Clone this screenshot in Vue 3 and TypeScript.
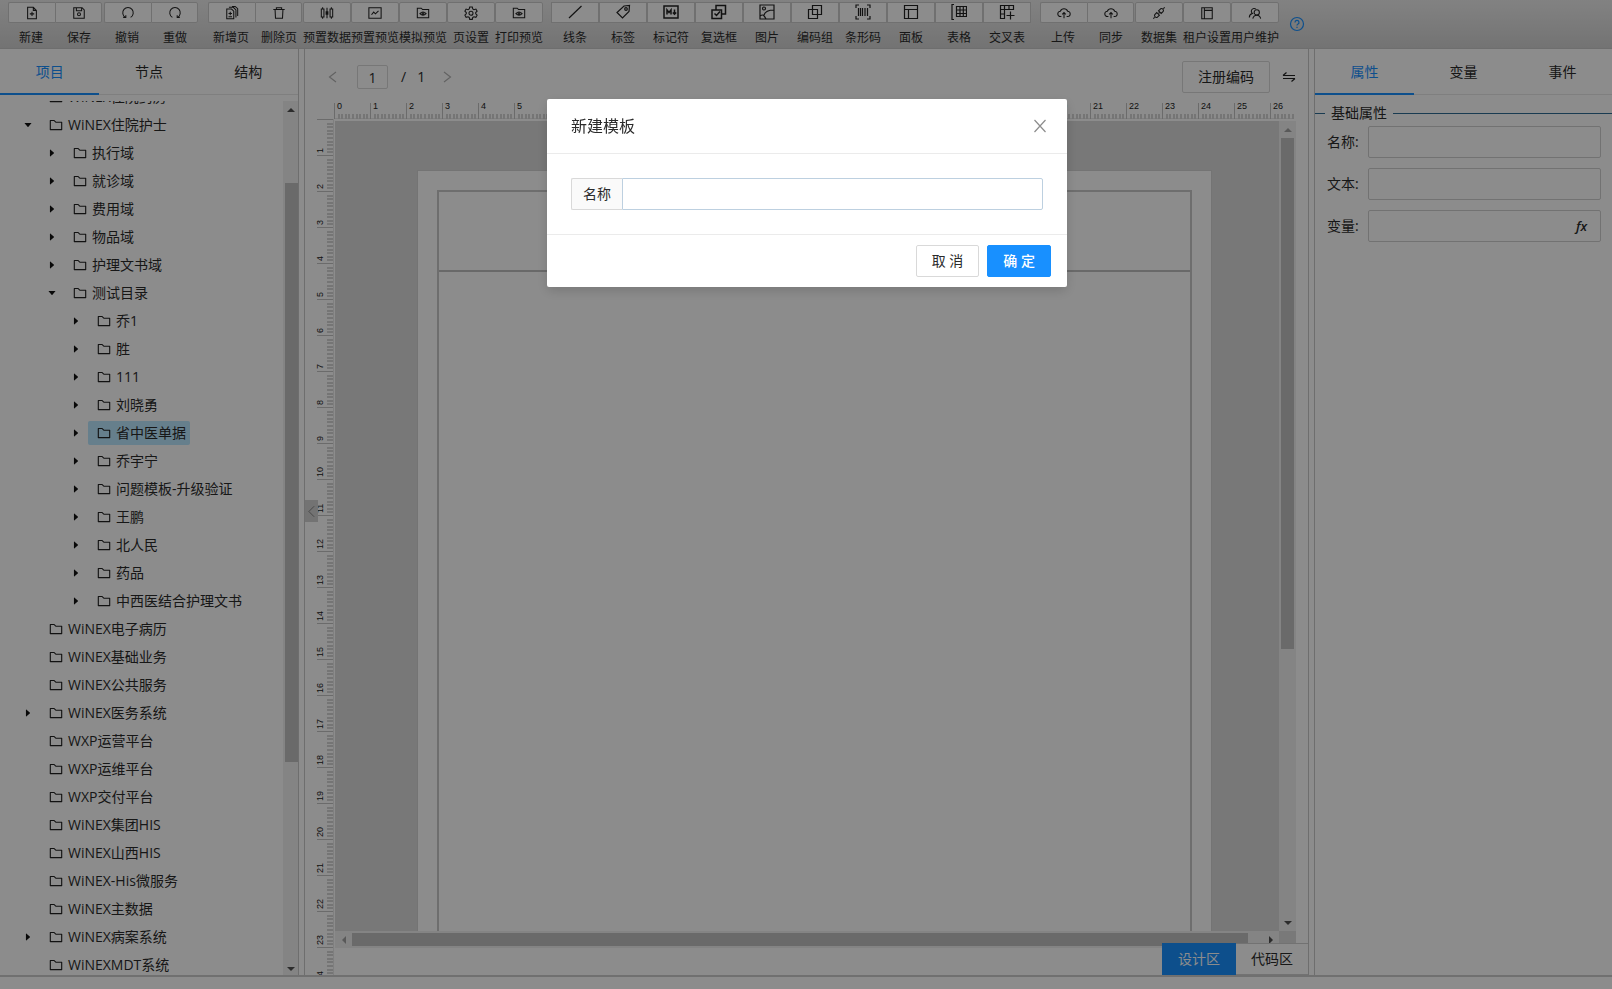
<script setup lang="ts">
import { ref } from 'vue'

interface Tool { label: string; icon: string; join?: 'start' | 'end' }
interface TreeNode { label: string; level: number; state?: 'open' | 'closed'; selected?: boolean }

const icons: Record<string, string> = {
  add: '<path d="M3 1.5h6.5L13 5v9.5H3zM9.5 1.5V5H13M8 6.5v5M5.5 9h5"/>',
  save: '<path d="M2 2h9.5L14 4.500V14H2zM5 2v3.500h6V2"/><circle cx="8" cy="9.500" r="1.700"/>',
  undo: '<path d="M5 13A6 6 0 1 1 11 13M2.500 13H5.500V10.500"/>',
  redo: '<path d="M11 13A6 6 0 1 0 5 13M13.500 13H10.500V10.500"/>',
  pages: '<path d="M2 3.500h5.500L10 6v8.500H2zM4.500 1.500h5l3 3V13M8 .500h3.500L14.500 3v8.500M6 6.500v4M4 8.500h4M4 12.300h4"/>',
  trash: '<path d="M1.500 4h13M5 4V2h6v2M3.500 4l.5 10h8l.5-10"/>',
  sliders: '<path d="M3 1.500v2M3 12.500v2M13 1.500v2M13 12.500v2M8 2v12M1.500 3.500h3v9h-3zM11.500 3.500h3v9h-3zM7 6.500h2v3H7z"/>',
  chart: '<path d="M1 2h14v12H1zM4 10l2.500-3 2 2L12 5.500"/>',
  preview: '<path d="M1.500 2.500h4.500L7.500 4h7v9.500h-13zM4.500 8.800Q8 5 11.500 8.800Q8 12 4.500 8.800z"/><circle cx="8" cy="8.800" r="1"/>',
  gear: '<path d="M6.500 1.200h3l.5 2.200 1.400.8 2.200-.7 1.400 2.500-1.600 1.500v1.500l1.600 1.500-1.400 2.500-2.200-.7-1.400.8-.5 2.200h-3L6 13.100l-1.400-.8-2.200.7L1 10.500 2.600 9V7.500L1 6l1.400-2.500 2.200.7L6 3.400z"/><circle cx="8" cy="8.200" r="2.300"/>',
  line: '<path d="M2 14L14.500 2"/>',
  tag: '<path d="M9 2l5.500-.500L14 7.500 7.500 14 2 8.500z"/><circle cx="11" cy="5" r="1.300"/>',
  mark: '<path stroke-width="1.500" d="M1 2h14v12H1zM4 10.500V6l2 2.500L8 6v4.500M11.500 5.500v4M9.800 8.500l1.700 1.700 1.700-1.700"/>',
  check: '<path stroke-width="1.500" d="M1 6h9.500v8.500H1zM5 6V1.500h9.500V10h-4M3.500 9.500l2 2 3.500-4"/>',
  image: '<path d="M1 1h14v14H1zM1 12c3-2 4-1 6 3M5 11c1-3 5-5 10-5"/><circle cx="5" cy="4.500" r="1.500"/>',
  group: '<path d="M1.500 5.500h9v9h-9zM5.500 1.500h9v9h-9z"/>',
  barcode: '<path d="M1 4V1h3M12 1h3v3M15 12v3h-3M4 15H1v-3M3.500 4v8M5.500 4v8M7.500 4v8M10 4v8M12.500 4v8"/>',
  panel: '<path d="M1.500 1.500h13v13h-13zM1.500 5.500h13M5.500 5.500v9"/>',
  grid: '<path d="M3 .500H1v15h2M5.500 2.500h10v10h-10zM5.500 6h10M5.500 9.500h10M9 2.500v10M12.300 2.500v10"/>',
  cross: '<path d="M1.500 1.500h13v4h-13zM1.500 5.500v9h4v-13M1.500 10h4M10 1.500v4M11.500 7.500v8M7.500 11.500h8"/>',
  cloud: '<path d="M5 12H4a3 3 0 0 1-.2-6A4.500 4.500 0 0 1 12.200 6a3 3 0 0 1-.2 6h-1M8 14V7.500M6 9.500l2-2 2 2"/>',
  link: '<path d="M1.500 14.500L3 13M13 3l1.500-1.500M7.500 5.500l3 3 2.300-2.300a2.200 2.200 0 0 0-3-3zM5.500 7.500l3 3-2.300 2.300a2.200 2.200 0 0 1-3-3zM7.500 7.500l1 1"/>',
  tenant: '<path d="M2 2h12v12.500H2zM5 2v12.500M5 5h9"/>',
  users: '<path d="M1.500 13c0-2.500 1.500-4 3.500-4.500A3.200 3.200 0 1 1 9 3.500M14.500 14.500c-.5-2.500-2-4-4.500-4-2.500 0-4 1.500-4.500 4"/><circle cx="10" cy="7.300" r="3"/>',
}

const groups: Tool[][] = [
  [
    { label: '新建', icon: 'add', join: 'start' }, { label: '保存', icon: 'save', join: 'end' },
    { label: '撤销', icon: 'undo', join: 'start' }, { label: '重做', icon: 'redo', join: 'end' },
  ],
  [
    { label: '新增页', icon: 'pages', join: 'start' }, { label: '删除页', icon: 'trash', join: 'end' },
    { label: '预置数据', icon: 'sliders' }, { label: '预置预览', icon: 'chart' },
    { label: '模拟预览', icon: 'preview' }, { label: '页设置', icon: 'gear' }, { label: '打印预览', icon: 'preview' },
  ],
  [
    { label: '线条', icon: 'line' }, { label: '标签', icon: 'tag' }, { label: '标记符', icon: 'mark' },
    { label: '复选框', icon: 'check' }, { label: '图片', icon: 'image' }, { label: '编码组', icon: 'group' },
    { label: '条形码', icon: 'barcode' }, { label: '面板', icon: 'panel' }, { label: '表格', icon: 'grid' },
    { label: '交叉表', icon: 'cross' },
  ],
  [
    { label: '上传', icon: 'cloud', join: 'start' }, { label: '同步', icon: 'cloud', join: 'end' },
    { label: '数据集', icon: 'link' }, { label: '租户设置', icon: 'tenant' }, { label: '用户维护', icon: 'users' },
  ],
]

const tree: TreeNode[] = [
  { label: 'WiNEX住院药房', level: 0 },
  { label: 'WiNEX住院护士', level: 0, state: 'open' },
  ...['执行域', '就诊域', '费用域', '物品域', '护理文书域'].map((label): TreeNode => ({ label, level: 1, state: 'closed' })),
  { label: '测试目录', level: 1, state: 'open' },
  ...['乔1', '胜', '111', '刘晓勇', '省中医单据', '乔宇宁', '问题模板-升级验证', '王鹏', '北人民', '药品', '中西医结合护理文书']
    .map((label): TreeNode => ({ label, level: 2, state: 'closed', selected: label === '省中医单据' })),
  { label: 'WiNEX电子病历', level: 0 },
  { label: 'WiNEX基础业务', level: 0 },
  { label: 'WiNEX公共服务', level: 0 },
  { label: 'WiNEX医务系统', level: 0, state: 'closed' },
  { label: 'WXP运营平台', level: 0 },
  { label: 'WXP运维平台', level: 0 },
  { label: 'WXP交付平台', level: 0 },
  { label: 'WiNEX集团HIS', level: 0 },
  { label: 'WiNEX山西HIS', level: 0 },
  { label: 'WiNEX-His微服务', level: 0 },
  { label: 'WiNEX主数据', level: 0 },
  { label: 'WiNEX病案系统', level: 0, state: 'closed' },
  { label: 'WiNEXMDT系统', level: 0 },
]

const UNIT = 36
function minorTicks(count: number): number[] {
  const out: number[] = []
  for (let i = 1; i < count * 10; i++) if (i % 10) out.push(Math.round((i * UNIT) / 10))
  return out
}
const across = Array.from({ length: 27 }, (_, i) => i)
const down = Array.from({ length: 25 }, (_, i) => i)
const acrossMinor = minorTicks(27)
const downMinor = minorTicks(25)

const leftTabs = ['项目', '节点', '结构']
const rightTabs = ['属性', '变量', '事件']
const leftTab = ref('项目')
const rightTab = ref('属性')
const page = ref('1')
const templateName = ref('')
const props = ref([
  { id: 'prop-name', label: '名称', value: '' },
  { id: 'prop-text', label: '文本', value: '' },
  { id: 'prop-var', label: '变量', value: '' },
])
</script>

<template>
  <div class="app">
    <header class="toolbar">
      <div v-for="(group, g) in groups" :key="g" class="tool-group" :class="{ elements: g === 2 }">
        <div v-for="tool in group" :key="tool.label" class="tool">
          <button type="button" class="tool-btn" :class="tool.join" :aria-label="tool.label">
            <svg viewBox="0 0 16 16" class="icon" v-html="icons[tool.icon]"></svg>
          </button>
          <span class="tool-label">{{ tool.label }}</span>
        </div>
      </div>
      <button type="button" class="help" aria-label="帮助">
        <svg viewBox="0 0 16 16"><circle cx="8" cy="8" r="6.500" /><path d="M6 6.500a2 2 0 1 1 2.700 1.800c-.5.200-.7.500-.7 1.200M8 10.700v1.300" /></svg>
      </button>
    </header>

    <main class="workspace">
      <aside class="panel side">
        <nav class="tabs">
          <button v-for="t in leftTabs" :key="t" type="button" class="tab" :class="{ active: t === leftTab }" @click="leftTab = t">{{ t }}</button>
        </nav>
        <div class="tree-area">
          <ul class="tree">
            <li v-for="node in tree" :key="node.label" class="node" :class="'level-' + node.level">
              <span class="switcher">
                <svg v-if="node.state" viewBox="0 0 1024 1024" :class="{ closed: node.state === 'closed' }"><path d="M840.4 300H183.600c-19.700 0-30.700 20.800-18.500 35l328.400 380.800c9.400 10.900 27.500 10.900 37 0L858.900 335c12.200-14.200 1.200-35-18.500-35z" /></svg>
              </span>
              <span class="node-body" :class="{ selected: node.selected }">
                <svg viewBox="0 0 1024 1024" class="folder"><path d="M880 298.400H521L403.700 186.200a8.150 8.150 0 0 0-5.500-2.200H144c-17.700 0-32 14.300-32 32v592c0 17.700 14.300 32 32 32h736c17.700 0 32-14.300 32-32V330.400c0-17.700-14.300-32-32-32zM840 768H184V256h188.500l119.600 114.400H840V768z" /></svg>
                <span>{{ node.label }}</span>
              </span>
            </li>
          </ul>
          <div class="bar vertical tree-bar">
            <i class="arrow up"></i><i class="thumb"></i><i class="arrow down"></i>
          </div>
        </div>
      </aside>

      <section class="panel center">
        <div class="pager">
          <button type="button" class="step" aria-label="上一页"><svg viewBox="0 0 16 16"><path d="M11 3L4.500 8l6.500 5" /></svg></button>
          <input v-model="page" class="page-input" aria-label="页码" />
          <span class="slash">/</span>
          <span class="total">1</span>
          <button type="button" class="step" aria-label="下一页"><svg viewBox="0 0 16 16"><path d="M5 3l6.500 5L5 13" /></svg></button>
          <button type="button" class="btn register">注册编码</button>
          <button type="button" class="swap" aria-label="切换">
            <svg viewBox="0 0 14 14"><path d="M1 5.500h12M1 5.500L4.500 2.500M1 8.500h12M13 8.500L9.500 11.500" /></svg>
          </button>
        </div>
        <div class="stage">
          <svg class="ruler-x">
            <g v-for="n in across" :key="n">
              <rect class="major" :x="n * UNIT" y="0" width="1" height="16" />
              <text :x="n * UNIT + 3" y="6">{{ n }}</text>
            </g>
            <rect v-for="t in acrossMinor" :key="t" class="minor" :x="t" y="11" width="2" height="5" />
          </svg>
          <svg class="ruler-y">
            <g v-for="n in down" :key="n">
              <rect class="major" x="0" :y="n * UNIT" width="16" height="1" />
              <text v-if="n" :transform="`translate(6 ${n * UNIT - 2}) rotate(-90)`">{{ n }}</text>
            </g>
            <rect v-for="t in downMinor" :key="t" class="minor" x="10" :y="t" width="6" height="2" />
          </svg>
          <div class="viewport">
            <div class="canvas">
              <div class="paper"><div class="frame"><div class="frame-head"></div></div></div>
            </div>
            <div class="bar vertical canvas-bar-y">
              <i class="arrow up dim"></i><i class="thumb"></i><i class="arrow down"></i>
            </div>
            <div class="bar horizontal canvas-bar-x">
              <i class="arrow left dim"></i><i class="thumb"></i><i class="arrow right"></i>
            </div>
            <div class="corner"></div>
          </div>
        </div>
        <button type="button" class="collapse" aria-label="收起"><svg viewBox="0 0 8 14"><path d="M7 1L1 7l6 6" /></svg></button>
        <div class="modes">
          <button type="button" class="mode on">设计区</button>
          <button type="button" class="mode">代码区</button>
        </div>
      </section>

      <aside class="panel side attributes">
        <nav class="tabs">
          <button v-for="t in rightTabs" :key="t" type="button" class="tab" :class="{ active: t === rightTab }" @click="rightTab = t">{{ t }}</button>
        </nav>
        <fieldset class="props">
          <legend>基础属性</legend>
          <div v-for="p in props" :key="p.id" class="prop">
            <label :for="p.id">{{ p.label }}:</label>
            <span class="prop-field">
              <input :id="p.id" v-model="p.value" />
              <em v-if="p.id === 'prop-var'">fx</em>
            </span>
          </div>
        </fieldset>
      </aside>
    </main>
    <footer class="status"></footer>

    <div class="mask">
      <div class="modal" role="dialog" aria-labelledby="modal-title">
        <div class="modal-head">
          <span id="modal-title">新建模板</span>
          <button type="button" class="close" aria-label="关闭"><svg viewBox="0 0 14 14"><path d="M1.500 1l11 12M12.500 1l-11 12" /></svg></button>
        </div>
        <div class="modal-body">
          <label class="addon" for="template-name">名称</label>
          <input id="template-name" v-model="templateName" class="name-input" />
        </div>
        <div class="modal-foot">
          <button type="button" class="btn">取 消</button>
          <button type="button" class="btn primary">确 定</button>
        </div>
      </div>
    </div>
  </div>
</template>

<style>
body { margin: 0; background: #fff; }
</style>

<style scoped>
.app {
  display: flex;
  flex-direction: column;
  height: 100vh;
  overflow: hidden;
  font: 14px/22px "Open Sans", "Noto Sans CJK SC", sans-serif;
  color: #2b2b2b;
}
.app *, .app { box-sizing: border-box; }
button, input { font: inherit; color: inherit; margin: 0; padding: 0; }
button { background: none; border: 0; cursor: pointer; }
svg { display: block; fill: none; }

.toolbar {
  display: flex;
  flex: none;
  gap: 8px;
  height: 49px;
  padding: 2px 7px 0;
  background: linear-gradient(#ededed, #d2d2d2);
  border-bottom: 1px solid #c8c8c8;
}
.tool-group { display: flex; flex: none; }
.tool { width: 48px; display: flex; flex-direction: column; align-items: center; }
.tool-btn {
  display: flex;
  align-items: center;
  justify-content: center;
  width: 48px;
  height: 24px;
  padding-top: 1px;
  background: #fff;
  border: 1px solid #cdcdcd;
  border-radius: 2px;
}
.tool-btn.start { border-right: 0; border-radius: 2px 0 0 2px; width: 47px; align-self: flex-end; }
.tool-btn.end { border-radius: 0 2px 2px 0; width: 47px; align-self: flex-start; }
.icon { width: 14px; height: 14px; stroke: #222; stroke-width: 1.2; }
.elements .tool-btn { padding: 0 0 1px; border-radius: 0; }
.elements .icon { width: 16px; height: 16px; }
.tool-label { padding-top: 3px; font-size: 12px; line-height: 20px; margin-top: 2px; white-space: nowrap; }
.help { margin: 14px 0 0 2px; width: 16px; height: 16px; }
.help svg { stroke: #1890ff; stroke-width: 1.2; }

.workspace { display: flex; flex: 1; min-height: 0; gap: 5px; }
.panel { background: #fff; min-height: 0; }
.side { flex: none; width: 299px; display: flex; flex-direction: column; border-right: 1px solid #c8c8c8; }
.side.attributes { width: 298px; border-right: 0; border-left: 1px solid #c8c8c8; }
.tabs { display: grid; grid-template-columns: repeat(3, 1fr); height: 46px; flex: none; border-bottom: 1px solid #e8e8e8; }
.tab { height: 46px; padding-top: 2px; border-bottom: 2px solid transparent; }
.tab.active { color: #1890ff; border-bottom-color: #1890ff; }

.tree-area { display: flex; flex: 1; min-height: 0; margin-top: 6px; overflow: hidden; }
.tree { flex: 1; min-width: 0; margin: -18px 0 0; padding: 0; list-style: none; }
.node { display: flex; align-items: center; height: 28px; white-space: nowrap; }
.level-0 { padding-left: 16px; }
.level-1 { padding-left: 40px; }
.level-2 { padding-left: 64px; }
.switcher { display: flex; justify-content: center; width: 24px; }
.switcher svg { width: 10px; height: 10px; fill: #111; }
.switcher .closed { transform: rotate(-90deg); }
.node-body { display: flex; align-items: center; gap: 4px; height: 24px; padding: 0 4px 0 8px; border-radius: 2px; }
.node-body.selected { background: #bae7ff; }
.folder { width: 16px; height: 16px; fill: #222; }

.bar { display: grid; background: #f0f0f0; }
.thumb { background: #c1c1c1; }
.vertical { width: 17px; }
.vertical .thumb { margin: 0 2px; }
.horizontal .thumb { margin: 2px 0; }
.tree-bar { width: 15px; grid-template-rows: 17px 65fr 574fr 200fr 12px; }
.tree-bar .thumb { grid-row: 3; margin: 0 0 0 2px; }
.tree-bar .down, .canvas-bar-y .down { grid-row: 5; }
.arrow { align-self: center; justify-self: center; width: 0; height: 0; border: 4px solid transparent; }
.up { border-top: 0; border-bottom-color: #505050; }
.down { border-bottom: 0; border-top-color: #505050; }
.left { border-left: 0; border-right-color: #505050; }
.right { border-right: 0; border-left-color: #505050; }
.up.dim { border-bottom-color: #a3a3a3; }
.left.dim { border-right-color: #a3a3a3; }

.center { position: relative; flex: 1; min-width: 0; display: flex; flex-direction: column; border: 1px solid #c8c8c8; border-width: 0 1px; }
.pager { display: flex; align-items: center; flex: none; height: 54px; padding: 2px 12px 0 20px; }
.step svg { width: 16px; height: 16px; stroke: #b4b4b4; stroke-width: 1.2; }
.page-input { width: 31px; height: 24px; margin-left: 16px; text-align: center; border: 1px solid #d9d9d9; border-radius: 2px; }
.slash { margin-left: 13px; }
.total { margin: 0 14px 0 11px; }
.btn {
  height: 32px;
  padding: 0 15px;
  background: #fff;
  border: 1px solid #d9d9d9;
  border-radius: 2px;
  line-height: 20px;
}
.register { margin-left: auto; }
.swap { margin-left: 12px; }
.swap svg { width: 14px; height: 14px; stroke: #222; stroke-width: 1.2; }

.stage {
  display: grid;
  flex: 1;
  min-height: 0;
  grid-template: 16px 1fr / 17px 1fr;
  padding: 0 12px;
}
.ruler-x { grid-column: 2; width: 100%; height: 16px; border-bottom: 1px solid #e8e8e8; overflow: visible; clip-path: inset(-2px 2px 0 0); }
.ruler-y { grid-row: 2; width: 17px; height: 100%; border-right: 1px solid #e8e8e8; overflow: visible; clip-path: inset(0 0 0 -2px); }
.major { fill: #c4c4c4; }
.minor { fill: #d6d6d6; }
.stage text { font: 9px "Liberation Sans", sans-serif; fill: #222; }
.viewport { display: grid; grid-template: minmax(0, 1fr) 17px / minmax(0, 1fr) 17px; margin: 2px 0 27px 1px; min-height: 0; }
.canvas { display: flex; padding: 49px 67px 0 82px; background: #dadada; overflow: hidden; }
.paper { flex: 1; padding: 19px 19px 0; background: #fff; border: 1px solid #d4d4d4; border-bottom: 0; }
.frame { height: 100%; border: 2px solid #c8c8c8; border-bottom: 0; }
.frame-head { height: 80px; border-bottom: 2px solid #c0c0c0; }
.canvas-bar-y { grid-template-rows: 17px 0 511fr 265fr 17px; }
.canvas-bar-y .thumb { grid-row: 3; }
.canvas-bar-x { grid-template-columns: 17px 896fr 14fr 17px; }
.canvas-bar-x .right { grid-column: 4; }
.corner { background: #dcdcdc; }

.collapse {
  position: absolute;
  left: 0;
  top: 451px;
  width: 13px;
  height: 22px;
  display: flex;
  align-items: center;
  justify-content: center;
  background: #d2d2d2;
}
.collapse svg { width: 7px; height: 13px; stroke: #777; }
.modes { position: absolute; right: 0; bottom: 0; display: flex; height: 32px; background: #fff; }
.mode { width: 72px; border: 1px solid #d0d0d0; border-width: 1px 0; }
.mode.on { width: 74px; background: #1890ff; border-color: #1890ff; color: #fff; }

.props { margin: 7px 0 0; padding: 0 11px 0 12px; border: 0; border-top: 1px solid #2f6c94; min-width: 0; }
.props legend { padding: 0 6px; margin-left: -2px; }
.prop { display: flex; align-items: center; gap: 6px; margin: 2px 0 10px; }
.prop + .prop { margin-top: 0; }
.prop label { width: 35px; white-space: nowrap; }
.prop-field { display: flex; align-items: center; flex: 1; min-width: 0; height: 32px; padding-right: 13px; border: 1px solid #d0d0d0; border-radius: 2px; }
.prop-field input { flex: 1; min-width: 0; height: 30px; padding-left: 11px; border: 0; background: none; outline: 0; }
.prop-field em { font-weight: 600; font-size: 13px; }

.status { flex: none; height: 14px; border-top: 2px solid #cdcdcd; background: #fff; }

.mask { position: fixed; inset: 0; display: flex; align-items: flex-start; justify-content: center; padding: 99px 0 0 2px; background: rgba(0, 0, 0, 0.45); }
.modal { width: 520px; max-width: 100%; background: #fff; border-radius: 2px; box-shadow: 0 4px 12px rgba(0, 0, 0, 0.15); }
.modal-head { display: flex; align-items: center; justify-content: space-between; height: 55px; padding: 0 20px 0 24px; border-bottom: 1px solid #ebebeb; font-size: 16px; }
.close svg { width: 14px; height: 14px; stroke: #8c8c8c; stroke-width: 1.2; }
.modal-body { display: flex; padding: 24px; }
.addon { height: 32px; padding: 0 11px; line-height: 30px; background: #fafafa; border: 1px solid #d9d9d9; border-right: 0; border-radius: 2px 0 0 2px; }
.name-input { flex: 1; min-width: 0; height: 32px; padding: 0 11px; border: 1px solid #bdd0e0; border-radius: 0 2px 2px 0; outline: 0; }
.modal-foot { display: flex; justify-content: flex-end; gap: 8px; padding: 10px 16px; border-top: 1px solid #ebebeb; }
.primary { background: #1890ff; border-color: #1890ff; color: #fff; font-weight: 500; }
</style>
